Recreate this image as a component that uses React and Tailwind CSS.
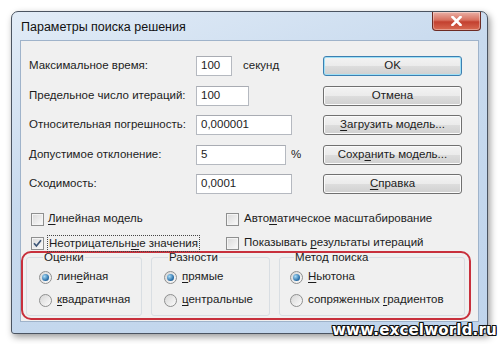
import React from "react";

// Win7-style "Параметры поиска решения" dialog

const U = ({ children }) => <span className="underline underline-offset-[2px] decoration-1">{children}</span>;

function Checkbox({ checked }) {
  return (
    <span className="flex h-[13px] w-[13px] shrink-0 items-center justify-center border border-[#8e8f8f] bg-gradient-to-br from-[#d9d9d9] to-[#fbfbfb] shadow-[inset_0_0_0_1px_#f4f4f4]">
      {checked && (
        <svg width="9" height="9" viewBox="0 0 9 9">
          <path d="M1 4.2 L3.4 7 L8 1.2" fill="none" stroke="#3d5677" strokeWidth="1.7" />
        </svg>
      )}
    </span>
  );
}

function Radio({ checked }) {
  return (
    <span className="flex h-[13px] w-[13px] shrink-0 items-center justify-center rounded-full border border-[#8e8f8f] bg-gradient-to-br from-[#d6d6d6] to-[#fcfcfc]">
      {checked && (
        <span className="h-[7px] w-[7px] rounded-full bg-[radial-gradient(circle_at_35%_35%,#a8dcf8,#2a6fa8_65%,#1a4a78)]" />
      )}
    </span>
  );
}

function Button({ children, primary }) {
  return (
    <div
      className={
        "flex h-[20px] items-center justify-center rounded-[3px] border bg-[linear-gradient(#f3f3f3,#ebebeb_50%,#dddddd_50%,#d0d0d0)] " +
        (primary ? "border-[#3c7fb1] shadow-[inset_0_0_0_1px_#9fe0f6]" : "border-[#707070] shadow-[inset_0_0_0_1px_#fbfbfb]")
      }
    >
      {children}
    </div>
  );
}

function Field({ label, value, width, suffix, suffixGap }) {
  return (
    <div className="flex h-[20px] items-center whitespace-nowrap">
      <span className="w-[167px] shrink-0">{label}</span>
      <div
        className="flex h-[20px] items-center border border-[#b5b9c0] border-t-[#a9acb3] bg-white pl-[4px]"
        style={{ width }}
      >
        {value}
      </div>
      {suffix && <span style={{ marginLeft: suffixGap }}>{suffix}</span>}
    </div>
  );
}

function Group({ title, width, pad, items }) {
  return (
    <fieldset
      className="h-[66px] shrink-0 rounded-[3px] border border-[#d9dee3]"
      style={{ width, paddingLeft: pad }}
    >
      <legend className="ml-[4px] px-[1px] leading-[14px]">{title}</legend>
      <div className="mt-[5px] flex flex-col gap-[7px]">
        {items.map((it, i) => (
          <div key={i} className="flex h-[16px] items-center gap-[5px] whitespace-nowrap">
            <Radio checked={i === 0} />
            <span>{it}</span>
          </div>
        ))}
      </div>
    </fieldset>
  );
}

export default function App() {
  return (
    <div className="relative h-[344px] w-[500px] overflow-hidden bg-white font-['Liberation_Sans',Arial,sans-serif] text-[11.5px] text-[#1c1c1c]">
      {/* window frame */}
      <div className="ml-[11px] mt-[11px] flex h-[323px] w-[477px] flex-col rounded-t-[7px] rounded-b-[3px] border border-[#4b5461] bg-[linear-gradient(160deg,#e2ecf7,#c8daee_40%,#bfd4ec)] shadow-[2px_3px_7px_rgba(0,0,0,0.4)]">
        {/* title bar */}
        <div className="flex h-[28px] shrink-0 items-start justify-between pl-[9px] pr-[6px]">
          <span className="mt-[7px] text-[12.5px] leading-[16px] text-[#111]">Параметры поиска решения</span>
          <div className="flex h-[19px] w-[49px] items-center justify-center rounded-b-[4px] border border-t-0 border-[#6d2b24] bg-[linear-gradient(#eab0a6,#d8705f_45%,#c3402f_55%,#d86a52)] shadow-[inset_0_0_0_1px_rgba(255,255,255,0.35)]">
            <svg width="11" height="10" viewBox="0 0 11 10">
              <path d="M1.5 1 L9.5 9 M9.5 1 L1.5 9" stroke="#fff" strokeWidth="2.6" strokeLinecap="square" />
            </svg>
          </div>
        </div>

        {/* client area */}
        <div className="mx-[8px] h-[282px] shrink-0 border border-[#9fb3ca] bg-[#f0f0f0] pl-[8px] pt-[15px]">
          <div className="flex">
            <div className="flex w-[294px] flex-col gap-[9.5px]">
              <Field label="Максимальное время:" value="100" width={36} suffix="секунд" suffixGap={11} />
              <Field label="Предельное число итераций:" value="100" width={53} />
              <Field label="Относительная погрешность:" value="0,000001" width={96} />
              <Field label="Допустимое отклонение:" value="5" width={90} suffix="%" suffixGap={5} />
              <Field label="Сходимость:" value="0,0001" width={96} />
            </div>
            <div className="flex w-[139px] flex-col gap-[9.5px]">
              <Button primary>OK</Button>
              <Button>Отмена</Button>
              <Button>
                <span><U>З</U>агрузить модель...</span>
              </Button>
              <Button>
                <span>Сохр<U>а</U>нить модель...</span>
              </Button>
              <Button>
                <span><U>С</U>правка</span>
              </Button>
            </div>
          </div>

          {/* checkboxes */}
          <div className="mt-[17px] ml-[2px] grid w-[440px] grid-cols-[195px_1fr] gap-y-[8px] whitespace-nowrap">
            <div className="flex h-[16px] items-center gap-[4px]">
              <Checkbox />
              <span><U>Л</U>инейная модель</span>
            </div>
            <div className="flex h-[16px] items-center gap-[5px]">
              <Checkbox />
              <span>Авто<U>м</U>атическое масштабирование</span>
            </div>
            <div className="flex h-[16px] items-center gap-[3px]">
              <Checkbox checked />
              <span className="border border-dotted border-[#444] px-[1px] leading-[15px]">Неотрицательн<U>ы</U>е значения</span>
            </div>
            <div className="flex h-[16px] items-center gap-[5px]">
              <Checkbox />
              <span>Показывать <U>р</U>езультаты итераций</span>
            </div>
          </div>

          {/* search options, circled in red */}
          <div className="-ml-[8px] h-[69px] w-[450px] rounded-[10px] border-2 border-[#c8303c] pl-[3px]">
            <div className="-mt-[3px] flex items-start gap-[9px]">
              <Group title="Оценки" width={116} pad={12} items={[<span key="a">лин<U>е</U>йная</span>, <span key="b"><U>к</U>вадратичная</span>]} />
              <Group title="Разности" width={119} pad={12} items={[<span key="a"><U>п</U>рямые</span>, <span key="b"><U>ц</U>ентральные</span>]} />
              <Group title="Метод поиска" width={186} pad={10} items={[<span key="a"><U>Н</U>ьютона</span>, <span key="b">сопряженных <U>г</U>радиентов</span>]} />
            </div>
          </div>
        </div>
      </div>

      {/* site watermark */}
      <div className="absolute bottom-[5px] right-[3px] font-['DejaVu_Sans',sans-serif] text-[15px] font-bold leading-[18px] tracking-[0.2px] text-white [text-shadow:-1px_-1px_0_#111,1px_-1px_0_#111,-1px_1px_0_#111,1px_1px_0_#111,0_1px_0_#111,0_-1px_0_#111,1px_0_0_#111,-1px_0_0_#111]">
        www.excelworld.ru
      </div>
    </div>
  );
}
